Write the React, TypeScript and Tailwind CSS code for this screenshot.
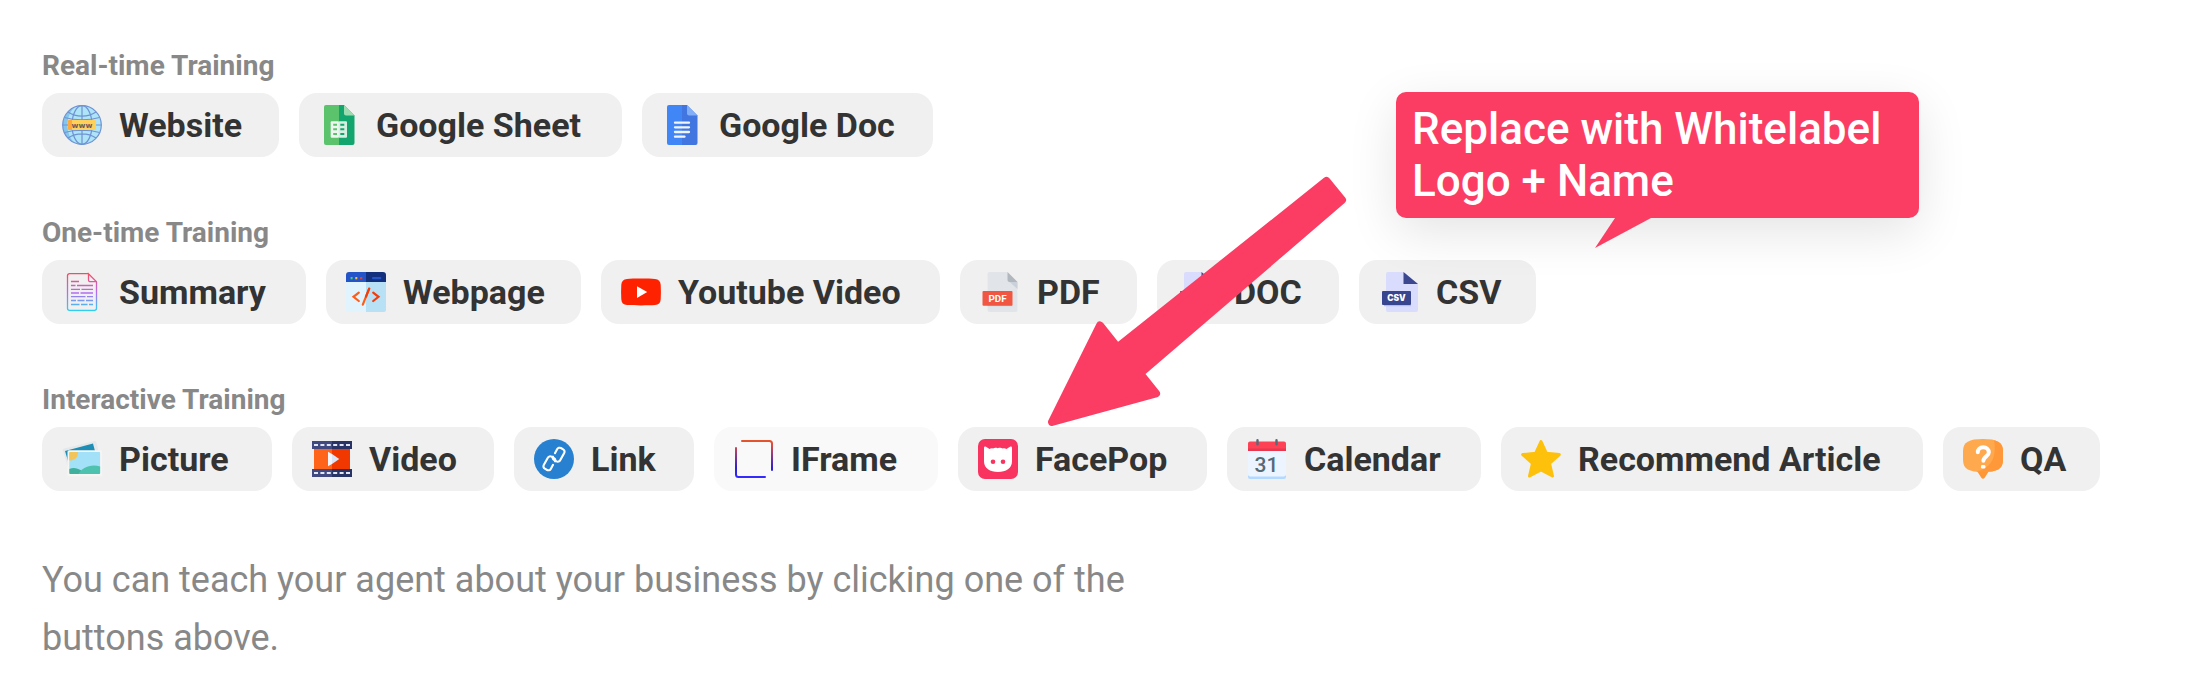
import type { ReactNode } from "react";

type Action = {
  label: string;
  width: string;
  icon: ReactNode;
  faded?: boolean;
};

function Icon({ children }: { children: ReactNode }) {
  return (
    <svg viewBox="0 0 40 40" className="size-10 shrink-0" fill="none" aria-hidden="true">
      {children}
    </svg>
  );
}

const WebsiteIcon = (
  <Icon>
    <circle cx="20" cy="20" r="19.4" fill="#aee4f8" />
    <path d="M13 2A19.4 19.4 0 0 0 13 38C3 30 3 10 13 2Z" fill="#85c5ec" />
    <g stroke="#6f93d2" strokeWidth="1.2">
      <circle cx="20" cy="20" r="19.3" />
      <ellipse cx="20" cy="20" rx="10" ry="19.3" />
      <path d="M20 .7v38.6M.7 20h38.6M6 7c8 5.500 20 5.500 28 0M6 33c8-5.500 20-5.500 28 0M2.500 12.500c10 3 25 3 35 0M2.500 27.500c10-3 25-3 35 0" />
    </g>
    <rect x="6" y="15" width="28" height="10" rx="1" fill="#ffd15b" />
    <path d="M7 15h3v10H7a1 1 0 0 1-1-1v-8a1 1 0 0 1 1-1Z" fill="#ffa93a" />
    <text x="20" y="22.600" textAnchor="middle" fontFamily="DejaVu Sans" fontWeight="700" fontSize="7.500" fill="#6b5a5a">
      www
    </text>
  </Icon>
);

const SheetIcon = (
  <Icon>
    <path d="M7 0h13v40H7a2 2 0 0 1-2-2V2a2 2 0 0 1 2-2Z" fill="#5ac36c" />
    <path d="M20 0h5l10.500 10.500V38a2 2 0 0 1-2 2H20Z" fill="#12a66e" />
    <path d="M25 0l10.500 10.500H27a2 2 0 0 1-2-2Z" fill="#9ddbb0" />
    <rect x="11.700" y="16.300" width="8.300" height="16.500" rx="1" fill="#f0f5f1" />
    <rect x="19.600" y="16.300" width="8.400" height="16.500" rx="1" fill="#d6efe3" />
    <path d="M14.200 19.700H18M14.200 24.300H18M14.200 29H18" stroke="#5ac36c" strokeWidth="2" />
    <path d="M21.300 19.700h4M21.300 24.300h4M21.300 29h4" stroke="#12a66e" strokeWidth="2" />
  </Icon>
);

const DocIcon = (
  <Icon>
    <path d="M7 0h13v40H7a2 2 0 0 1-2-2V2a2 2 0 0 1 2-2Z" fill="#4086f7" />
    <path d="M20 0h5l10.500 10.500V38a2 2 0 0 1-2 2H20Z" fill="#4175df" />
    <path d="M25 0l10.500 10.500H27a2 2 0 0 1-2-2Z" fill="#80aef8" />
    <path d="M13 17.700h14M13 22.300h14M13 27h14M13 31.700h9.500" stroke="#f1f5fd" strokeWidth="2.300" strokeLinecap="round" />
  </Icon>
);

const SummaryIcon = (
  <Icon>
    <defs>
      <linearGradient id="summary" x1="0" y1="1" x2="0" y2="39" gradientUnits="userSpaceOnUse">
        <stop offset="0" stopColor="#fb4a5c" />
        <stop offset=".5" stopColor="#b66af0" />
        <stop offset="1" stopColor="#29d2ef" />
      </linearGradient>
    </defs>
    <g stroke="url(#summary)" strokeWidth="1.300">
      <path d="M26.500 1.700H7.500a2 2 0 0 0-2 2v32.600a2 2 0 0 0 2 2h25a2 2 0 0 0 2-2V9.700L26.500 1.700V8a1.700 1.700 0 0 0 1.700 1.700h6.300" />
      <path d="M9 9.500h8M9 13.500h4.500M15 13.500h16M9 17.300h9M19.500 17.300h11.500M9 21h8M18.500 21h12.500M9 24.700h14.500M25 24.700h6M9 28.500h5M15.500 28.500h7M24 28.500h7M9 32.500h8.500M19 32.500h6.500M27 32.500h4" />
    </g>
  </Icon>
);

const WebpageIcon = (
  <Icon>
    <path d="M0 10h20v30H2a2 2 0 0 1-2-2Z" fill="#e1f4fe" />
    <path d="M20 10h20v28a2 2 0 0 1-2 2H20Z" fill="#b8e1f5" />
    <path d="M3 0h17v10H0V3a3 3 0 0 1 3-3Z" fill="#2454c7" />
    <path d="M20 0h17a3 3 0 0 1 3 3v7H20Z" fill="#12307e" />
    <rect x="4.600" y="5" width="2" height="2.300" fill="#3dd65b" />
    <rect x="9.300" y="5" width="2" height="2.300" fill="#f9c03d" />
    <rect x="14" y="5" width="2.300" height="2.300" fill="#d94132" />
    <rect x="26" y="5" width="9.300" height="2.300" rx="1" fill="#2454c7" />
    <path d="M12.800 20.600 7.500 24.800l5.300 4.200M23.200 16.700l-6.400 16" stroke="#ff5d17" strokeWidth="2.200" strokeLinecap="round" />
    <path d="M27.200 20.600l5.300 4.200-5.300 4.200M23.200 16.700 20 24.700" stroke="#f53c08" strokeWidth="2.200" strokeLinecap="round" />
  </Icon>
);

const YoutubeIcon = (
  <Icon>
    <path d="M20 6.500c6 0 10.500.100 14 .400 3.600.300 5.500 2.200 5.700 5.800.300 4.800.300 9.800 0 14.600-.200 3.600-2.100 5.500-5.700 5.800-7 .500-21 .500-28 0C2.400 32.800.500 30.900.300 27.300c-.300-4.800-.300-9.800 0-14.600C.500 9.100 2.400 7.200 6 6.900c3.500-.300 8-.400 14-.400Z" fill="#ff2200" />
    <path d="M16 14.300v11.600l10.200-5.800Z" fill="#fff" />
  </Icon>
);

const PdfIcon = (
  <Icon>
    <path d="M9.500 0h18l10 10v28a2 2 0 0 1-2 2h-26a2 2 0 0 1-2-2V2a2 2 0 0 1 2-2Z" fill="#e1e5e9" />
    <path d="M29.500 10h8v7Z" fill="#cad1da" />
    <path d="M27.500 0l10 10h-8a2 2 0 0 1-2-2Z" fill="#b0b7bd" />
    <path d="M7.500 33h25v1.300h-25Z" fill="#cad1da" />
    <rect x="2.500" y="19" width="30" height="14.700" rx="1" fill="#f15642" />
    <text x="17.500" y="29.800" textAnchor="middle" fontFamily="Roboto" fontWeight="700" fontSize="9.800" fill="#fff">
      PDF
    </text>
  </Icon>
);

function NavyFile({ text }: { text: string }) {
  return (
    <Icon>
      <path d="M9 0h15.500L39 12v26a2 2 0 0 1-2 2H9a2 2 0 0 1-2-2V2a2 2 0 0 1 2-2Z" fill="#d9dcfc" />
      <path d="M24.500 0 39 12H24.500Z" fill="#3b478f" />
      <path d="M5 33h27v1.200H5Z" fill="#b4baf0" />
      <rect x="3" y="19" width="29" height="14" rx="1" fill="#38468f" />
      <text x="17.500" y="29" textAnchor="middle" fontFamily="Inter" fontWeight="900" fontSize="8.400" fill="#fff">
        {text}
      </text>
    </Icon>
  );
}

const PictureIcon = (
  <Icon>
    <path d="M.900 11.200a1.500 1.500 0 0 1 1.100-1.700L32.500 2a1.500 1.500 0 0 1 1.800 1.100L38 18 5.500 27Z" fill="#e4e8ea" />
    <path d="M3 12 31 4.500 34 16 6 22Z" fill="#1d8fb6" />
    <rect x="5.500" y="11.200" width="34.500" height="26" rx="1.500" fill="#f5f5f4" />
    <rect x="7.300" y="13" width="30.800" height="22" rx="1" fill="#a2e1f7" />
    <path d="M8.300 13H16a7.500 7.500 0 0 1-8.700 8.300V14a1 1 0 0 1 1-1Z" fill="#f1c55b" />
    <path d="M7.300 30c4-2 8-1 12 1.500L19 35H8.300a1 1 0 0 1-1-1Z" fill="#3fb09c" />
    <path d="M16.500 35c3-6 12-10.500 21.600-7.500V34a1 1 0 0 1-1 1Z" fill="#4dc2ae" />
  </Icon>
);

const VideoIcon = (
  <Icon>
    <path d="M2 8h18v24H2Z" fill="#ff641a" />
    <path d="M20 8h18v24H20Z" fill="#f03800" />
    <path d="M0 2h20v8H0ZM0 30h20v8H0Z" fill="#404a80" />
    <path d="M20 2h20v8H20ZM20 30h20v8H20Z" fill="#283366" />
    <path d="M2 6h36M2 34h36" stroke="#e1e6f0" strokeWidth="2.200" strokeDasharray="4 2.400" />
    <path d="M16 12.700 20 15v10l-4 2.300Z" fill="#f2f6fc" />
    <path d="M20 15l7.300 5L20 25Z" fill="#dbe3f7" />
  </Icon>
);

const LinkIcon = (
  <Icon>
    <circle cx="20" cy="20" r="20" fill="#2781d0" />
    <g stroke="#fff" strokeWidth="2.100" strokeLinejoin="round" strokeLinecap="round">
      <path
        transform="translate(24.700 15.700) rotate(29)"
        d="M-4 .500V-4.200A2.700 2.700 0 0 1-1.300-6.900h2.600A2.700 2.700 0 0 1 4-4.200v8.400A2.700 2.700 0 0 1 1.300 6.900h-2.600A2.700 2.700 0 0 1-4 4.500"
      />
      <path
        transform="translate(15.300 24.300) rotate(209)"
        d="M-4 .500V-4.200A2.700 2.700 0 0 1-1.300-6.900h2.600A2.700 2.700 0 0 1 4-4.200v8.400A2.700 2.700 0 0 1 1.300 6.900h-2.600A2.700 2.700 0 0 1-4 4.500"
      />
    </g>
  </Icon>
);

const IframeIcon = (
  <Icon>
    <defs>
      <linearGradient id="iframe" x1="0" y1="2" x2="0" y2="38" gradientUnits="userSpaceOnUse">
        <stop offset="0" stopColor="#e4542f" />
        <stop offset=".12" stopColor="#d94b45" />
        <stop offset=".75" stopColor="#2d1fd0" />
        <stop offset="1" stopColor="#342bff" />
      </linearGradient>
    </defs>
    <path d="M8 2h27.500a2.500 2.500 0 0 1 2.500 2.500V31M2 9v26.500a2.500 2.500 0 0 0 2.500 2.500H31" stroke="url(#iframe)" strokeWidth="2" strokeLinecap="round" />
  </Icon>
);

const FacePopIcon = (
  <Icon>
    <rect width="40" height="40" rx="7" fill="#f8335f" />
    <path d="M6 9c0-1.500.900-1.900 2-1.200l3.500 2.100c1-.700 2.300-.900 3.500-.500 1.500-.700 3-.700 4.700-.200 1.800-.500 3.600-.500 5 .200 1.300-.400 2.600-.200 3.700.500L32 7.800c1.100-.700 2-.300 2 1.200v13.500C34 29 28 33 20 33S6 29 6 22.500Z" fill="#fff" />
    <circle cx="15" cy="22.800" r="2.300" fill="#f8335f" />
    <circle cx="25" cy="22.800" r="2.300" fill="#f8335f" />
  </Icon>
);

const CalendarIcon = (
  <Icon>
    <path d="M1 30h38v8a2 2 0 0 1-2 2H3a2 2 0 0 1-2-2Z" fill="#b3dafe" />
    <path d="M1 10h38v25a2.500 2.500 0 0 1-2.500 2.500h-33A2.500 2.500 0 0 1 1 35Z" fill="#ecf4ff" />
    <path d="M3 2.500h34a2 2 0 0 1 2 2V12H1V4.500a2 2 0 0 1 2-2Z" fill="#ff4155" />
    <path d="M1 9.500h38V12H1Z" fill="#e8384f" />
    <path d="M10.500 1.300v4M29.500 1.300v4" stroke="#546a79" strokeWidth="2.400" strokeLinecap="round" />
    <text x="19.500" y="32.500" textAnchor="middle" fontFamily="Roboto" fontWeight="500" fontSize="21" fill="#546a79">
      31
    </text>
  </Icon>
);

const StarIcon = (
  <Icon>
    <path
      d="M20 2.500l5.300 11.700 13 1.400-9.800 8.700L31.500 37 20 31 8.500 37l3-12.700-9.800-8.700 13-1.400Z"
      fill="#fdc10c"
      stroke="#fdc10c"
      strokeWidth="3"
      strokeLinejoin="round"
    />
  </Icon>
);

const QuestionIcon = (
  <Icon>
    <path d="M14 32l4.500 7a1.800 1.800 0 0 0 3 0L26 32Z" fill="#ff9636" />
    <path d="M20 0C34 0 40 3 40 12v9c0 9-6 12-20 12S0 30 0 21v-9C0 3 6 0 20 0Z" fill="#ffa94f" />
    <path d="M31 1.200c6 1.500 9 4.800 9 10.800v9c0 9-6 12-20 12-3 0-5.500-.200-7.700-.500C28 30 34 18 31 1.200Z" fill="#ff9839" />
    <path d="M14.800 13.300c0-3 2.200-5 5.400-5s5.600 2 5.600 5.200c0 3.800-5.400 4-5.400 8.300" stroke="#fff" strokeWidth="4" strokeLinecap="round" strokeLinejoin="round" />
    <rect x="18" y="26" width="4.400" height="3.500" rx="1.200" fill="#fff" />
  </Icon>
);

const groups: { title: string; actions: Action[] }[] = [
  {
    title: "Real-time Training",
    actions: [
      { label: "Website", width: "min-w-[237px]", icon: WebsiteIcon },
      { label: "Google Sheet", width: "min-w-[323px]", icon: SheetIcon },
      { label: "Google Doc", width: "min-w-[291px]", icon: DocIcon },
    ],
  },
  {
    title: "One-time Training",
    actions: [
      { label: "Summary", width: "min-w-[264px]", icon: SummaryIcon },
      { label: "Webpage", width: "min-w-[255px]", icon: WebpageIcon },
      { label: "Youtube Video", width: "min-w-[339px]", icon: YoutubeIcon },
      { label: "PDF", width: "min-w-[177px]", icon: PdfIcon },
      { label: "DOC", width: "min-w-[182px]", icon: <NavyFile text="DOC" /> },
      { label: "CSV", width: "min-w-[177px]", icon: <NavyFile text="CSV" /> },
    ],
  },
  {
    title: "Interactive Training",
    actions: [
      { label: "Picture", width: "min-w-[230px]", icon: PictureIcon },
      { label: "Video", width: "min-w-[202px]", icon: VideoIcon },
      { label: "Link", width: "min-w-[180px]", icon: LinkIcon },
      { label: "IFrame", width: "min-w-[224px]", icon: IframeIcon, faded: true },
      { label: "FacePop", width: "min-w-[249px]", icon: FacePopIcon },
      { label: "Calendar", width: "min-w-[254px]", icon: CalendarIcon },
      { label: "Recommend Article", width: "min-w-[422px]", icon: StarIcon },
      { label: "QA", width: "min-w-[157px]", icon: QuestionIcon },
    ],
  },
];

function ActionButton({ label, width, icon, faded }: Action) {
  return (
    <button
      type="button"
      className={`flex h-16 items-center gap-[17px] rounded-[18px] pr-6 pl-5 text-[34px] leading-[38px] font-bold whitespace-nowrap text-[#333333] ${width} ${
        faded ? "bg-[#f9f9f9]" : "bg-[#f0f0f0]"
      }`}
    >
      {icon}
      {label}
    </button>
  );
}

function Callout() {
  return (
    <aside className="absolute top-[92px] left-[1396px] w-[523px] rounded-[10px] bg-[#fb3d63] px-4 py-[11px] font-['Roboto',sans-serif] text-[44px] leading-[52px] font-medium text-white shadow-[0_14px_50px_rgba(0,0,0,0.11)]">
      Replace with Whitelabel Logo + Name
      <svg viewBox="0 0 56 31" className="absolute top-full left-[199px] h-[31px] w-14" aria-hidden="true">
        <path d="M20 0h36L0 30Z" fill="#fb3d63" />
      </svg>
    </aside>
  );
}

function Arrow() {
  return (
    <svg
      viewBox="0 0 300 252"
      className="pointer-events-none absolute top-[176px] left-[1047px] h-[252px] w-[300px]"
      aria-hidden="true"
    >
      <path
        d="M279.500 5 295 24 93 197.500 109 217.500 5 246 53 149.500 70.500 171.500Z"
        fill="#fb3d63"
        stroke="#fb3d63"
        strokeWidth="8"
        strokeLinejoin="round"
      />
    </svg>
  );
}

export default function App() {
  return (
    <main className="relative min-h-screen bg-white px-[42px] pt-12 pb-7 font-['Roboto',sans-serif]">
      <div className="flex flex-col gap-[58px]">
        {groups.map((group) => (
          <section key={group.title}>
            <h2 className="text-[28px] leading-9 font-bold text-[#888888]">{group.title}</h2>
            <div className="mt-[9px] flex flex-wrap gap-5">
              {group.actions.map((action) => (
                <ActionButton key={action.label} {...action} />
              ))}
            </div>
          </section>
        ))}
      </div>
      <p className="mt-[60px] max-w-[1120px] text-[36px] leading-[58px] text-[#888888]">
        You can teach your agent about your business by clicking one of the buttons above.
      </p>
      <Arrow />
      <Callout />
    </main>
  );
}
